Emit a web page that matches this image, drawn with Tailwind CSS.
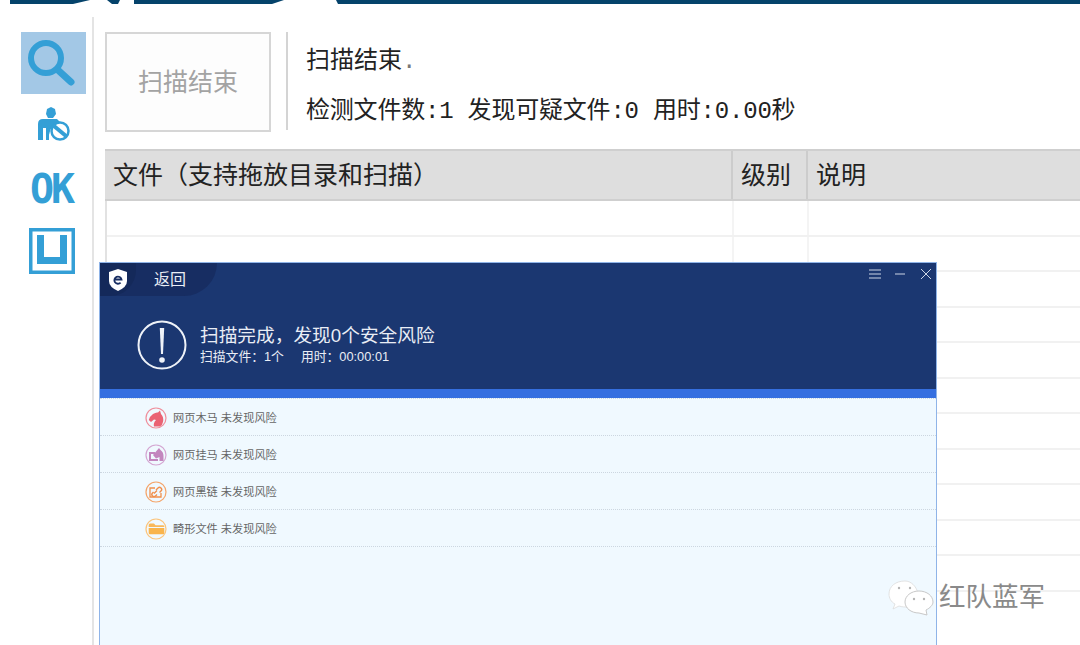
<!DOCTYPE html>
<html lang="en">
<head>
    <meta charset="UTF-8">
    <title>扫描结束</title>
    <script src="https://cdn.jsdelivr.net/npm/@tailwindcss/browser@4"></script>
</head>
<body class="bg-white">
<div class="relative w-[1080px] h-[645px] overflow-hidden bg-white font-['Liberation_Sans','Noto_Sans_CJK_SC',sans-serif]">
    <!-- top strip -->
    <svg class="block" width="1080" height="5" viewBox="0 0 1080 5">
        <path d="M10 0H90L73 4H10Z M107 0H120L118 4H112Z M134 0H284L272 4H134Z M336 0H1080V4H338Z" fill="#05436b"/>
    </svg>

    <div class="flex h-[640px]">
        <!-- tool column -->
        <div class="w-[94px] h-full shrink-0 flex flex-col items-center pt-[15px] pl-[21px] pr-[6px] border-r-2 border-[#e4e4e4] mt-[12px]">
            <div class="w-[65px] h-[62px] shrink-0 bg-[#a3c8e6]">
                <svg width="65" height="62" viewBox="0 0 65 62" fill="none">
                    <circle cx="25" cy="26" r="15" stroke="#349fd6" stroke-width="6"/>
                    <path d="M38 39L50 50" stroke="#349fd6" stroke-width="7" stroke-linecap="round"/>
                </svg>
            </div>
            <svg class="mt-[13px] shrink-0" width="34" height="34" viewBox="0 0 34 34">
                <path d="M14 0L18 2L19 7L16 11H11L9 7L10 2Z" fill="#349fd6"/>
                <path d="M1 33V17Q1 12 6 12H20L23 15Q13 18 12 28V33H9V21H6V33Z" fill="#349fd6"/>
                <circle cx="23" cy="24" r="8.5" fill="#fff" stroke="#349fd6" stroke-width="2.5"/>
                <path d="M17 19L29 29" stroke="#349fd6" stroke-width="4"/>
            </svg>
            <div class="mt-[33px] -ml-[5px] h-[30px] shrink-0 flex items-center text-[40px] leading-none font-bold text-[#349fd6] font-['DejaVu_Sans_Mono',monospace] tracking-[-3px]">OK</div>
            <svg class="mt-[24px] -ml-[4px] shrink-0" width="46" height="46" viewBox="0 0 46 46" fill="none">
                <rect x="1.75" y="1.75" width="42.5" height="42.5" stroke="#349fd6" stroke-width="3.5"/>
                <path d="M11.5 7V32.5H34.5V7" stroke="#349fd6" stroke-width="7"/>
            </svg>
        </div>

        <!-- main panel -->
        <div class="flex-1 pl-[11px] pt-[27px] min-w-0">
            <div class="flex h-[100px]">
                <div class="w-[166px] h-[100px] pt-[2px] border-2 border-[#d6d6d6] bg-[#fdfdfd] flex items-center justify-center text-[25px] text-[#a3a3a3]">扫描结束</div>
                <div class="ml-[15px] w-[2px] h-[98px] bg-[#d4d4d4]"></div>
                <div class="ml-[18px] text-[#222] text-[24px] leading-[34px] font-['Liberation_Mono','Noto_Sans_CJK_SC',monospace]">
                    <div class="mt-[13px]">扫描结束<span class="text-[#777]">.</span></div>
                    <div class="mt-[16px] whitespace-nowrap tracking-[-0.2px]">检测文件数:1 发现可疑文件:0 用时:0.00秒</div>
                </div>
            </div>

            <!-- result table -->
            <div class="mt-[17px] w-[975px]">
                <div class="flex h-[52px] bg-[#dedede] border-y-2 border-[#cfcfcf] text-[25px] text-[#222]">
                    <div class="w-[628px] pl-[8px] pt-[2px] border-r-2 border-[#cccccc] flex items-center whitespace-nowrap">文件（支持拖放目录和扫描）</div>
                    <div class="w-[75px] pl-[8px] pt-[2px] border-r-2 border-[#cccccc] flex items-center">级别</div>
                    <div class="flex-1 pl-[8px] pt-[2px] flex items-center">说明</div>
                </div>
                <div class="flex flex-col border-l-2 border-[#e2e2e2]">
                    <div class="h-[36px] border-b-2 border-[#f1f1f1] flex"><div class="w-[627px] border-r-2 border-[#f4f4f4]"></div><div class="w-[75px] border-r-2 border-[#f4f4f4]"></div></div>
                    <div class="h-[35px] border-b-2 border-[#f1f1f1] flex"><div class="w-[627px] border-r-2 border-[#f4f4f4]"></div><div class="w-[75px] border-r-2 border-[#f4f4f4]"></div></div>
                    <div class="h-[36px] border-b-2 border-[#f1f1f1]"></div>
                    <div class="h-[35px] border-b-2 border-[#f1f1f1]"></div>
                    <div class="h-[36px] border-b-2 border-[#f1f1f1]"></div>
                    <div class="h-[35px] border-b-2 border-[#f1f1f1]"></div>
                    <div class="h-[36px] border-b-2 border-[#f1f1f1]"></div>
                    <div class="h-[35px] border-b-2 border-[#f1f1f1]"></div>
                    <div class="h-[36px] border-b-2 border-[#f1f1f1]"></div>
                    <div class="h-[35px] border-b-2 border-[#f1f1f1]"></div>
                    <div class="h-[36px] border-b-2 border-[#f1f1f1]"></div>
                </div>
            </div>
        </div>
    </div>

    <!-- scan result window on top -->
    <div class="absolute left-[99px] top-[262px] w-[838px] h-[383px] border border-[#8fb4e8] border-b-0 bg-[#f0f9ff] flex flex-col">
        <div class="relative h-[126px] bg-[#1b3771]">
            <div class="absolute left-0 top-0 w-[117px] h-[33px] bg-[#172d62] rounded-br-[34px] flex items-center">
                <div class="w-[36px] h-[33px] bg-[#14295a] rounded-br-[26px] flex items-center justify-center">
                    <svg width="20" height="24" viewBox="0 0 20 24" fill="none">
                        <path d="M10 1L19 4V13Q19 19 10 23Q1 19 1 13V4Z" fill="#fff"/>
                        <path d="M6.5 11.5H13.5A3.6 3.6 0 1 0 12.6 14.6" stroke="#172d62" stroke-width="1.8"/>
                    </svg>
                </div>
                <span class="ml-[18px] text-[16px] text-[#e9edf5]">返回</span>
            </div>
            <div class="absolute right-[5px] top-[6px] flex items-center">
                <svg width="12" height="10" viewBox="0 0 12 10" stroke="#cdd6e6"><path d="M0 1H12M0 5H12M0 9H12"/></svg>
                <svg class="ml-[14px]" width="10" height="10" viewBox="0 0 10 10" stroke="#cdd6e6"><path d="M0 5H10"/></svg>
                <svg class="ml-[16px]" width="10" height="10" viewBox="0 0 10 10" stroke="#cdd6e6"><path d="M0 0L10 10M10 0L0 10"/></svg>
            </div>
            <div class="absolute left-[37px] top-[57px] flex items-center gap-[13px]">
                <svg width="50" height="50" viewBox="0 0 50 50" fill="none">
                    <circle cx="25" cy="25" r="23.5" stroke="#eef2f8" stroke-width="2"/>
                    <path d="M22.8 8H27.2L26 34H24Z" fill="#eef2f8"/>
                    <circle cx="25" cy="40" r="2.8" fill="#eef2f8"/>
                </svg>
                <div class="text-[#e9edf5] -mt-[1px]">
                    <div class="text-[18.7px] leading-[24px] whitespace-nowrap">扫描完成，发现0个安全风险</div>
                    <div class="text-[12.8px] leading-[18px] whitespace-nowrap">扫描文件：1个<span class="ml-[17px]">用时：00:00:01</span></div>
                </div>
            </div>
        </div>
        <div class="h-[9px] bg-[#356fe0]"></div>
        <div class="text-[11.2px] text-[#666] border-t border-dotted border-[#ccd6e0]">
            <div class="h-[37px] pt-[2px] border-b border-dotted border-[#ccd6e0] flex items-center pl-[45px] gap-[6px]">
                <svg width="22" height="22" viewBox="0 0 22 22" fill="none">
                    <circle cx="11" cy="11" r="10" stroke="#ef8f9c" stroke-width="1.2"/>
                    <path d="M15 3.5L16 7Q19 10 18 15Q17.5 18 15 19.5H9Q8 16 11 13L9 12.5L6 15L3.8 13Q5 9 8 7Q11 5 13 5.5Z" fill="#ea6374"/>
                </svg>
                <span>网页木马 未发现风险</span>
            </div>
            <div class="h-[37px] pt-[2px] border-b border-dotted border-[#ccd6e0] flex items-center pl-[45px] gap-[6px]">
                <svg width="22" height="22" viewBox="0 0 22 22" fill="none">
                    <circle cx="11" cy="11" r="10" stroke="#d4a6d2" stroke-width="1.2"/>
                    <path d="M4 8H10V10H6V15H13V17H4Z" fill="#c386bf"/>
                    <path d="M8 11L14 4L15.5 6Q18.5 8 18.5 12V17H14.5V13L11 14.5Z" fill="#c386bf"/>
                </svg>
                <span>网页挂马 未发现风险</span>
            </div>
            <div class="h-[37px] pt-[2px] border-b border-dotted border-[#ccd6e0] flex items-center pl-[45px] gap-[6px]">
                <svg width="22" height="22" viewBox="0 0 22 22" fill="none">
                    <circle cx="11" cy="11" r="10" stroke="#f4a56b" stroke-width="1.2"/>
                    <path d="M10 7H5V16H16V12" stroke="#f08f4c" stroke-width="1.3"/>
                    <path d="M9 12.5L12 9.5M8.5 11L7.5 12A2 2 0 0 0 10.5 15L12 13.5M11 9L13 7A2 2 0 0 1 16 10L14.5 11.5" stroke="#f08f4c" stroke-width="1.4"/>
                </svg>
                <span>网页黑链 未发现风险</span>
            </div>
            <div class="h-[37px] pt-[2px] border-b border-dotted border-[#ccd6e0] flex items-center pl-[45px] gap-[6px]">
                <svg width="22" height="22" viewBox="0 0 22 22" fill="none">
                    <circle cx="11" cy="11" r="10" stroke="#fbc47c" stroke-width="1.2"/>
                    <path d="M3.7 7Q3.7 5.5 5 5.5H9L10.5 7.2H18Q19.3 7.2 19.3 8.5V9H3.7Z" fill="#f9b859"/>
                    <path d="M3.7 10H19.3V15Q19.3 16.3 18 16.3H5Q3.7 16.3 3.7 15Z" fill="#f9b44c"/>
                </svg>
                <span>畸形文件 未发现风险</span>
            </div>
        </div>
    </div>

    <!-- account watermark -->
    <div class="absolute left-[888px] top-[578px] flex items-center gap-[5px]">
        <svg width="46" height="38" viewBox="0 0 46 38">
            <path d="M17 2C8 2 1 7 1 15C1 19 3 23 7 25L5 30L11 27C14 28 17 28 19 28L30 14C28 7 23 2 17 2Z" fill="#fff" stroke="#dcdcdc" stroke-width="0.8"/>
            <path d="M31 12C23 12 17 17 17 23C17 29 23 34 31 34L39 36L38 31C42 29 45 26 45 23C45 17 39 12 31 12Z" fill="#fff" stroke="#c8c8c8" stroke-width="1"/>
            <circle cx="11" cy="9" r="1.2" fill="#b5b5b5"/><circle cx="22" cy="9" r="1.2" fill="#b5b5b5"/>
            <circle cx="26" cy="20" r="1.2" fill="#b5b5b5"/><circle cx="36" cy="20" r="1.2" fill="#b5b5b5"/>
        </svg>
        <span class="text-[26.5px] text-[#8a8a8a] whitespace-nowrap">红队蓝军</span>
    </div>
</div>
</body>
</html>
